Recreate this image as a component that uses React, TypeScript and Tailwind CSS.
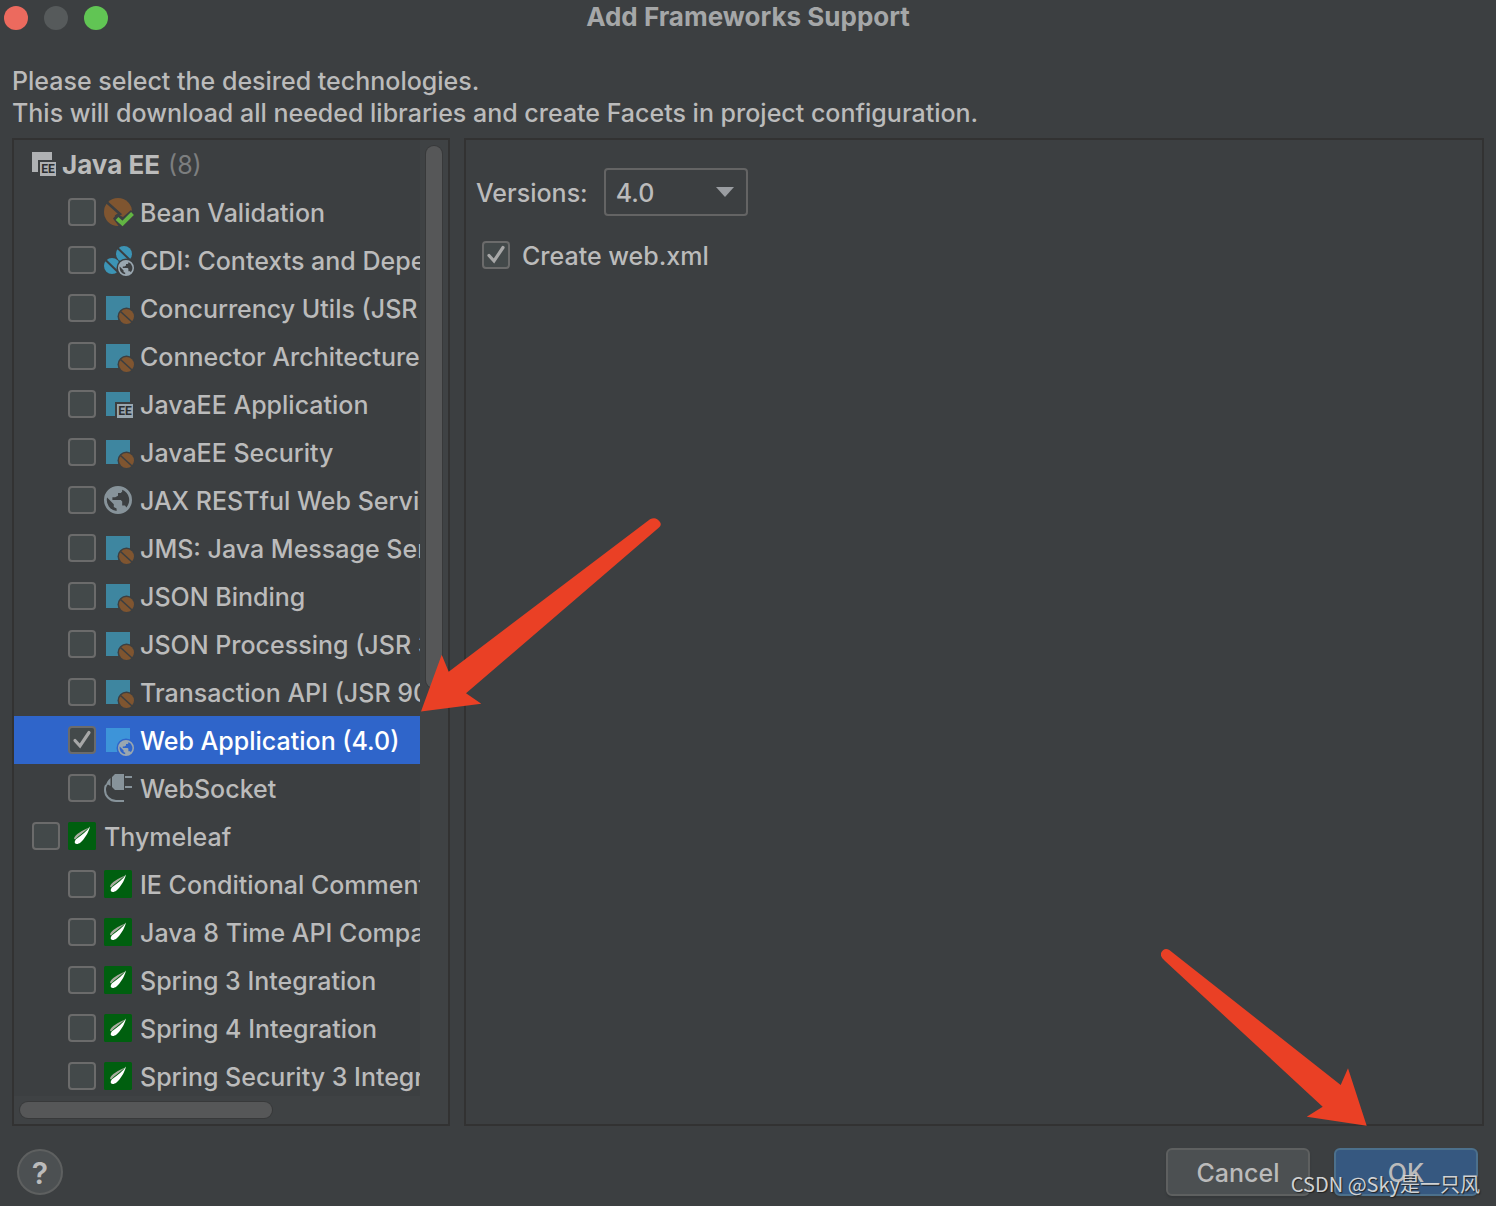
import { useState, type ReactNode } from "react";
import clsx from "clsx";

function Globe({ size = 28 }: { size?: number }) {
  return (
    <g transform={`scale(${size / 20}) translate(-2 -2)`} fillRule="evenodd">
      <path d="M12 2a10 10 0 1 0 0 20a10 10 0 0 0 0-20z M4.2 10.2L9 15V17L11 18V19.9A8 8 0 0 1 4.2 10.2z M15 4.6V6L14 7H12V9L10 10H8V12H14L15 13V16H17L18 17.3A8 8 0 0 0 15 4.6z" />
    </g>
  );
}

function Icon({ children }: { children: ReactNode }) {
  return (
    <svg aria-hidden="true" viewBox="0 0 32 32" className="size-8 shrink-0">
      {children}
    </svg>
  );
}

function EeBadge({ x, fill }: { x: number; fill: string }) {
  return (
    <>
      <rect x={x - 2} y="12" width="18" height="18" fill="#3c3f41" />
      <rect x={x} y="14" width="16" height="14" fill={fill} />
      <text
        x={x + 8}
        y="25"
        textAnchor="middle"
        fill="#2b2e30"
        className="font-[Roboto,sans-serif] text-[12px] font-bold"
      >
        EE
      </text>
    </>
  );
}

function GroupIcon() {
  return (
    <Icon>
      <path d="M4 4h20v20H4z" fill="#afb1b3" />
      <EeBadge x={12} fill="#afb1b3" />
    </Icon>
  );
}

function BeanIcon() {
  return (
    <Icon>
      <path d="M4 4h24v24H4z" fill="#3e86a0" />
      <circle cx="24.5" cy="24.5" r="9" fill="#3c3f41" />
      <circle cx="24.5" cy="24.5" r="7.5" fill="#7f5530" />
      <path d="M18.5 19.5L30 30" stroke="#3c3f41" strokeWidth="1.6" />
    </Icon>
  );
}

function EeAppIcon() {
  return (
    <Icon>
      <path d="M4 4h24v24H4z" fill="#3e86a0" />
      <g transform="translate(0 2)">
        <EeBadge x={15} fill="#9aa7b0" />
      </g>
    </Icon>
  );
}

function ValidationIcon() {
  return (
    <Icon>
      <circle cx="16" cy="16" r="14" fill="#7f5530" />
      <path d="M4 5.5L18 18L14.5 20L20 30" fill="none" stroke="#3c3f41" strokeWidth="2.6" />
      <path d="M15 18L11 22.5L18 32H32V18L29 14L21 21z" fill="#3c3f41" />
      <path d="M15 22.5L20.5 27.5L30.5 17.5" fill="none" stroke="#62b543" strokeWidth="4" />
    </Icon>
  );
}

function CdiIcon() {
  return (
    <Icon>
      <circle cx="22" cy="10" r="8" fill="#3c94b5" />
      <circle cx="10" cy="22" r="8" fill="#3c94b5" />
      <path d="M15 3.5L29 17M3 15.5L17 29" stroke="#3c3f41" strokeWidth="2" />
      <circle cx="24" cy="24" r="9.5" fill="#3c3f41" />
      <g transform="translate(16 16)" fill="#9aa7b0">
        <Globe size={16} />
      </g>
    </Icon>
  );
}

function RestIcon() {
  return (
    <Icon>
      <g transform="translate(2 2)" fill="#87939a">
        <Globe />
      </g>
    </Icon>
  );
}

function WebIcon() {
  return (
    <Icon>
      <path d="M4 4h24v24H4z" fill="#3d94d9" />
      <circle cx="24" cy="24" r="9.5" fill="#2f65ca" />
      <g transform="translate(16 16)" fill="#9aa7b0">
        <Globe size={16} />
      </g>
    </Icon>
  );
}

function SocketIcon() {
  return (
    <Icon>
      <path d="M13 2h9v16h-9l-3-3V5z M23 4h7v2h-7z M23 14h7v2h-7z" fill="#87939a" />
      <path d="M8.5 6v8L6 12.5L3.5 15C4 11 6 8 8.5 6z" fill="#87939a" />
      <path d="M4 13C3 15 3 16 3 18A11 11 0 0 0 14 29H22" fill="none" stroke="#87939a" strokeWidth="2" />
    </Icon>
  );
}

function LeafIcon() {
  return (
    <Icon>
      <rect x="2" y="2" width="28" height="28" rx="1.5" fill="#005f0f" />
      <path d="M23 7.5C16 11 9 14 8 18.500L9 19.500C13 15 18 12.500 23 7.500z" fill="#a9ada0" />
      <path d="M24 6.500C22.500 13 18 19.500 14.500 22.500C12 24.300 10 24.500 8.800 23C8.500 21 9.500 19.500 11 18.500C16 15 20.500 11.500 24 6.500z" fill="#fff" />
    </Icon>
  );
}

const items = [
  { label: "Bean Validation", icon: ValidationIcon },
  { label: "CDI: Contexts and Dependency Injection", icon: CdiIcon },
  { label: "Concurrency Utils (JSR 236)", icon: BeanIcon },
  { label: "Connector Architecture (JSR 322)", icon: BeanIcon },
  { label: "JavaEE Application", icon: EeAppIcon },
  { label: "JavaEE Security", icon: BeanIcon },
  { label: "JAX RESTful Web Services", icon: RestIcon },
  { label: "JMS: Java Message Service", icon: BeanIcon },
  { label: "JSON Binding", icon: BeanIcon },
  { label: "JSON Processing (JSR 353)", icon: BeanIcon },
  { label: "Transaction API (JSR 907)", icon: BeanIcon },
  { label: "Web Application (4.0)", icon: WebIcon },
  { label: "WebSocket", icon: SocketIcon },
  { label: "Thymeleaf", icon: LeafIcon, root: true },
  { label: "IE Conditional Comments", icon: LeafIcon },
  { label: "Java 8 Time API Compatibility", icon: LeafIcon },
  { label: "Spring 3 Integration", icon: LeafIcon },
  { label: "Spring 4 Integration", icon: LeafIcon },
  { label: "Spring Security 3 Integration", icon: LeafIcon },
];

function Checkbox({ checked, onChange }: { checked: boolean; onChange: () => void }) {
  return (
    <span className="grid size-7 shrink-0">
      <input
        type="checkbox"
        checked={checked}
        onChange={onChange}
        className="col-start-1 row-start-1 size-7 appearance-none rounded border-2 border-[#6b6b6b] bg-[#43494a]"
      />
      {checked && (
        <svg aria-hidden="true" viewBox="0 0 28 28" className="pointer-events-none col-start-1 row-start-1 size-7">
          <path d="M7 14.5L12 20L21 6.5" fill="none" stroke="#a7a7a7" strokeWidth="3.2" strokeLinecap="round" />
        </svg>
      )}
    </span>
  );
}

export default function App() {
  const [selected, setSelected] = useState(["Web Application (4.0)"]);
  const [webXml, setWebXml] = useState(true);

  const toggle = (label: string) =>
    setSelected((prev) => (prev.includes(label) ? prev.filter((l) => l !== label) : [...prev, label]));

  return (
    <div className="relative flex h-screen flex-col overflow-hidden bg-[#3c3f41] font-[Inter,'Noto_Sans_CJK_SC',sans-serif] text-[25px] leading-8 font-medium text-[#bbbbbb]">
      <header className="grid h-9 shrink-0 grid-cols-[1fr_auto_1fr] items-center px-1">
        <div className="flex gap-4">
          <button aria-label="Close" className="size-6 rounded-full bg-[#ec6a5e]" />
          <button aria-label="Minimize" className="size-6 rounded-full bg-[#565a5b]" />
          <button aria-label="Zoom" className="size-6 rounded-full bg-[#61c554]" />
        </div>
        <h1 className="pb-0.5 text-[26px] font-bold text-[#a5a7a8]">Add Frameworks Support</h1>
      </header>

      <p className="shrink-0 px-3 pt-[29px]">
        Please select the desired technologies.
        <br />
        This will download all needed libraries and create Facets in project configuration.
      </p>

      <main className="flex min-h-0 flex-1 gap-3.5 px-3 pt-[9px]">
        <section className="grid w-[438px] shrink-0 grid-cols-[1fr_28px] grid-rows-[minmax(0,1fr)_28px] border-2 border-[#323232] bg-[#3f4244]">
          <ul className="overflow-hidden bg-[#3c3f41]">
            <li className="flex h-12 items-center gap-0.5 pl-3.5 whitespace-nowrap">
              <GroupIcon />
              <span className="pt-0.5 text-[26px] font-bold">Java EE</span>
              <span className="ml-1.5 pt-0.5 font-normal text-[#7c7e7f]">(8)</span>
            </li>
            {items.map(({ label, icon: ItemIcon, root }) => {
              const active = label === "Web Application (4.0)";
              return (
                <li key={label}>
                  <label
                    className={clsx(
                      "flex h-12 items-center gap-1.5 whitespace-nowrap",
                      root ? "pl-[18px]" : "pl-[54px]",
                      active && "bg-[#2f65ca] text-white",
                    )}
                  >
                    <Checkbox checked={selected.includes(label)} onChange={() => toggle(label)} />
                    <ItemIcon />
                    <span className="pt-0.5">{label}</span>
                  </label>
                </li>
              );
            })}
          </ul>
          <div className="px-1.5 pt-1.5">
            <div className="h-[57%] rounded-full bg-[#565758] ring-1 ring-[#38393a]" />
          </div>
          <div className="px-1.5 pt-1.5">
            <div className="h-4 w-[64%] rounded-full bg-[#565758] ring-1 ring-[#38393a]" />
          </div>
        </section>

        <section className="flex flex-1 flex-col gap-[22px] border-2 border-[#323232] px-2.5 pt-7">
          <div className="flex items-center gap-4">
            <label htmlFor="version" className="pt-0.5">
              Versions:
            </label>
            <div className="grid w-36 items-center">
              <select
                id="version"
                defaultValue="4.0"
                className="col-start-1 row-start-1 h-12 appearance-none rounded border-2 border-[#646464] bg-[#3c3f41] pt-0.5 pl-2.5"
              >
                <option>4.0</option>
                <option>3.1</option>
                <option>3.0</option>
              </select>
              <svg
                aria-hidden="true"
                viewBox="0 0 18 10"
                className="pointer-events-none col-start-1 row-start-1 mr-3.5 h-2.5 w-[18px] justify-self-end"
              >
                <path d="M0 0h18l-9 10z" fill="#9a9da1" />
              </svg>
            </div>
          </div>
          <label className="flex items-center gap-3 pl-1.5">
            <Checkbox checked={webXml} onChange={() => setWebXml(!webXml)} />
            <span className="pt-0.5">Create web.xml</span>
          </label>
        </section>
      </main>

      <footer className="flex shrink-0 items-center gap-6 pt-[22px] pr-[18px] pb-2.5 pl-[17px]">
        <button
          aria-label="Help"
          className="mr-auto size-[46px] rounded-full border-2 border-[#5e6060] bg-[#4c5052] pt-0.5 text-3xl font-semibold"
        >
          ?
        </button>
        <button className="h-12 w-36 rounded-md border-2 border-[#5e6060] bg-[#4c5052] pt-0.5 shadow-[0_2px_2px_#35383a]">
          Cancel
        </button>
        <button className="h-12 w-36 rounded-md border-2 border-[#4c708c] bg-[#365880] pt-0.5 shadow-[0_2px_2px_#35383a]">
          OK
        </button>
      </footer>

      {/* annotations over the dialog */}
      <svg
        aria-hidden="true"
        viewBox="0 0 240 194"
        className="pointer-events-none absolute top-[518px] left-[421px] h-[194px] w-60"
      >
        <path
          d="M0 193.5L20.7 136.7L27.7 153.7L229 1.3Q235 -2 239 4Q241 7 238 9.5L45 175.3L60.3 185.7z"
          fill="#ea4025"
        />
      </svg>
      <svg
        aria-hidden="true"
        viewBox="0 0 206 178"
        className="pointer-events-none absolute right-[129px] bottom-20 h-[178px] w-[206px]"
      >
        <path
          d="M205.7 177.7L187 120.3L179.7 137L8.3 2Q3 -1 0 5Q-1 9 4 13L161.7 158.7L145.7 168.7z"
          fill="#ea4025"
        />
      </svg>
      <span className="pointer-events-none absolute right-4 bottom-1.5 font-['Noto_Sans_CJK_SC',sans-serif] text-[20px] font-normal whitespace-nowrap text-[#d0d2d4] [text-shadow:1px_1px_1px_#222]">
        CSDN @Sky是一只风
      </span>
    </div>
  );
}
